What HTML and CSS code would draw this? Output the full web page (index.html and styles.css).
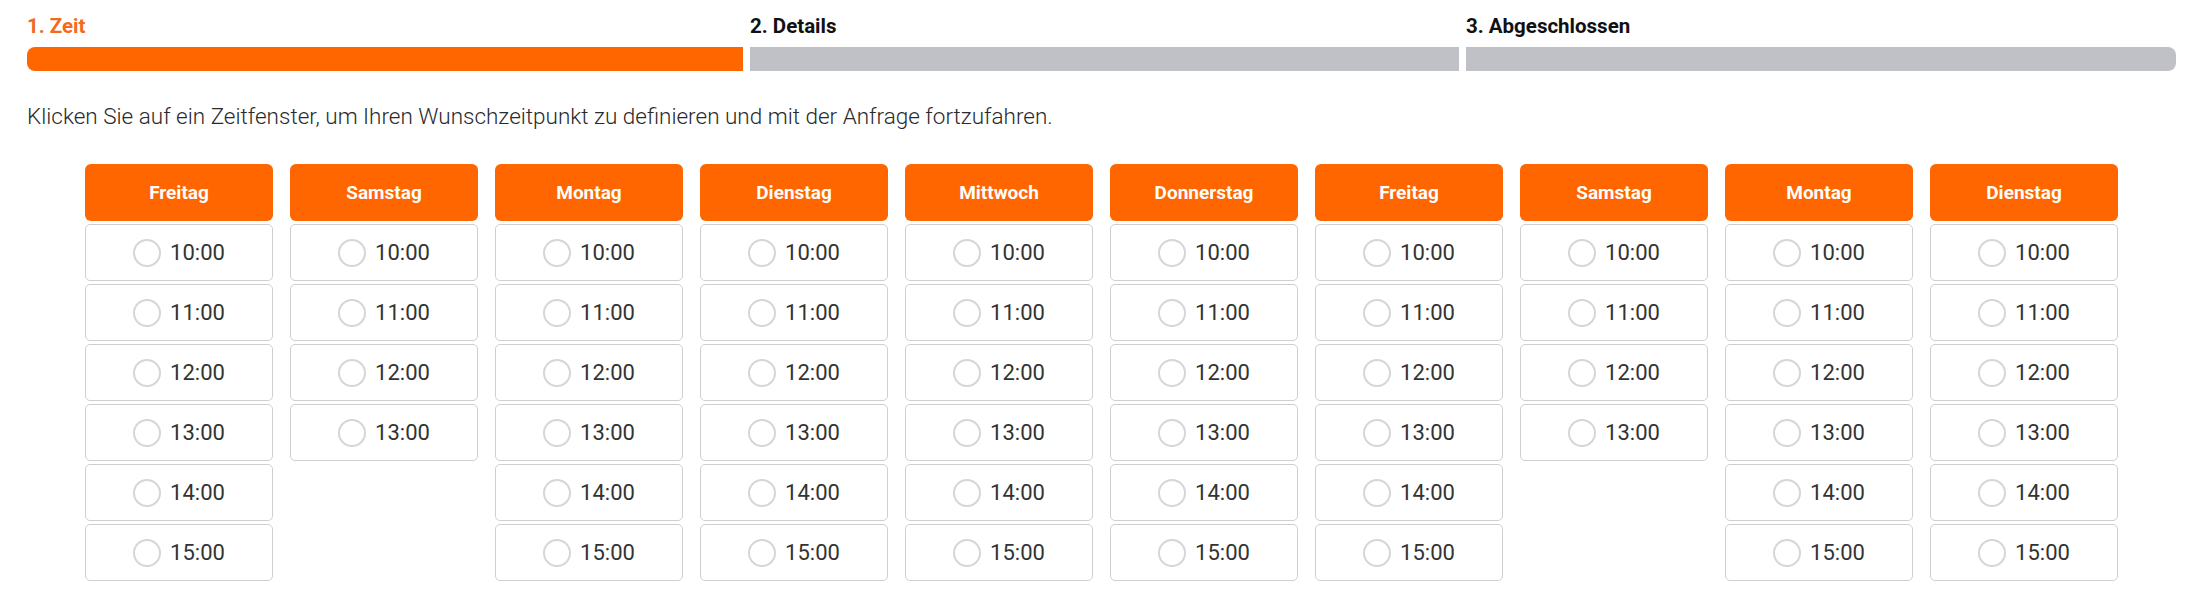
FILE: index.html
```html
<!DOCTYPE html>
<html>
<head>
  <meta charset="UTF-8">
  <title>Terminanfrage</title>
  <link rel="stylesheet" href="styles.css">
</head>
<body>

<div class="wizard">
  <div class="steps">
    <div class="step active">
      <div class="step-label">1. Zeit</div>
      <div class="step-bar"></div>
    </div>
    <div class="step">
      <div class="step-label">2. Details</div>
      <div class="step-bar"></div>
    </div>
    <div class="step">
      <div class="step-label">3. Abgeschlossen</div>
      <div class="step-bar"></div>
    </div>
  </div>

  <p class="hint">Klicken Sie auf ein Zeitfenster, um Ihren Wunschzeitpunkt zu definieren und mit der Anfrage fortzufahren.</p>

  <div class="days" id="days"></div>
</div>

<script>
const days = [
  ["Freitag", 6], ["Samstag", 4], ["Montag", 6], ["Dienstag", 6], ["Mittwoch", 6],
  ["Donnerstag", 6], ["Freitag", 6], ["Samstag", 4], ["Montag", 6], ["Dienstag", 6]
];
const wrap = document.getElementById("days");
days.forEach(([name, count]) => {
  let slots = "";
  for (let h = 10; h < 10 + count; h++) {
    slots += `
      <label class="slot">
        <span class="radio"></span>
        <span class="time">${h}:00</span>
      </label>`;
  }
  wrap.insertAdjacentHTML("beforeend", `
    <div class="day">
      <div class="day-head">${name}</div>
      ${slots}
    </div>`);
});
</script>

</body>
</html>
```

FILE: styles.css
```css
body {
  margin: 0;
  font-family: Roboto, "Liberation Sans", sans-serif;
  color: #222;
  background: #fff;
}
.wizard {
  padding: 14px 22px 0 27px;
}
.steps {
  display: grid;
  grid-template-columns: 716fr 709fr 710fr;
  column-gap: 7px;
}
.step-label {
  font-size: 20.5px;
  font-weight: 700;
  line-height: 24px;
  margin-bottom: 9px;
  color: #111;
}
.step-bar {
  height: 24px;
  background: #c0c1c6;
}
.step:first-child .step-bar {
  border-radius: 8px 0 0 8px;
}
.step:last-child .step-bar {
  border-radius: 0 8px 8px 0;
}
.step.active .step-label {
  color: #f26b1d;
}
.step.active .step-bar {
  background: #ff6600;
}
.hint {
  margin: 33px 0 36px;
  font-size: 22.5px;
  line-height: 24px;
  font-weight: 300;
  color: #2a2a2a;
}
.days {
  display: flex;
  justify-content: center;
  align-items: flex-start;
  gap: 17px;
}
.day {
  width: 188px;
  display: flex;
  flex-direction: column;
  gap: 3px;
}
.day-head {
  height: 57px;
  background: #ff6600;
  border-radius: 6px;
  color: #fff;
  font-size: 19px;
  font-weight: 700;
  display: flex;
  align-items: center;
  justify-content: center;
}
.slot {
  height: 57px;
  box-sizing: border-box;
  border: 1px solid #cfcfcf;
  border-radius: 5px;
  display: flex;
  align-items: center;
  justify-content: center;
  gap: 9px;
  cursor: pointer;
}
.radio {
  width: 28px;
  height: 28px;
  box-sizing: border-box;
  border: 2px solid #d6d6d6;
  border-radius: 50%;
}
.time {
  font-size: 22px;
  color: #333;
}
```
